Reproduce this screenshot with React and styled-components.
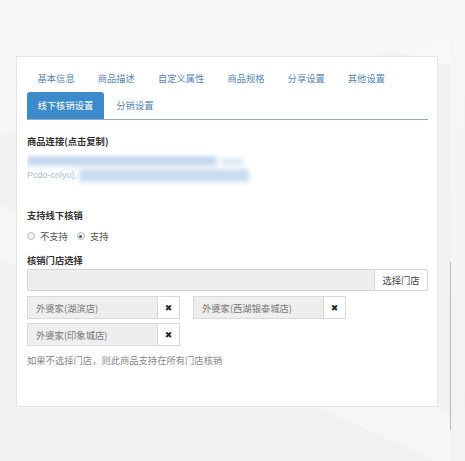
import React from 'react';
import styled, { createGlobalStyle } from 'styled-components';

const GlobalStyle = createGlobalStyle`
    html, body {
        margin: 0;
        padding: 0;
    }
    body {
        font-family: "Noto Sans CJK SC", "Noto Sans", sans-serif;
        background-color: #f1f1f1;
        background-image:
            linear-gradient(168deg, #f7f7f7 0%, #f7f7f7 24%, rgba(255,255,255,0) 24.2%),
            linear-gradient(205deg, rgba(255,255,255,0) 62%, #f6f6f6 62.2%, #f6f6f6 70%, rgba(255,255,255,0) 70.2%),
            linear-gradient(15deg, rgba(255,255,255,0) 88%, #f8f8f8 88.2%);
    }
`;

const Page = styled.div`
    display: flex;
    width: 465px;
    height: 461px;
    overflow: hidden;
`;

const Main = styled.div`
    width: 434px;
    padding: 56px 0 0 16px;
`;

const Strip = styled.div`
    width: 15px;
    padding-top: 262px;
    background: linear-gradient(180deg, #f6f6f6 0%, #f3f3f3 100%);
`;

const StripLine = styled.div`
    width: 1px;
    height: 168px;
    background: #b8b8b8;
`;

const Card = styled.div`
    box-sizing: border-box;
    width: 422px;
    height: 351px;
    background: #fff;
    border: 1px solid #e6e6e6;
    padding: 8px 9px 0 10px;
    font-size: 9.3px;
`;

const TabList = styled.ul`
    display: flex;
    flex-wrap: wrap;
    list-style: none;
    margin: 0;
    padding: 0;
    border-bottom: 1px solid #8fb0c0;
`;

const Tab = styled.li`
    height: 27px;
    line-height: 27px;
    padding: 0 10.5px;
    margin-right: 2px;
    border-radius: 3px 3px 0 0;
    white-space: nowrap;
    color: ${p => (p.$active ? '#fff' : '#5686b8')};
    background: ${p => (p.$active ? '#3d8bcb' : 'transparent')};
`;

const Label = styled.div`
    margin-top: ${p => p.$top || 0}px;
    line-height: 14px;
    font-weight: bold;
    color: #333;
`;

const LinkBlock = styled.div`
    margin-top: 6px;
    height: 32px;
    overflow: hidden;
`;

const BlurLine = styled.div`
    height: 14px;
    white-space: nowrap;
    display: flex;
    align-items: center;
`;

const Blur = styled.span`
    display: inline-block;
    height: ${p => p.$h || 10}px;
    width: ${p => p.$w}px;
    background: ${p => p.$c || '#c6daf0'};
    filter: blur(2.5px);
    margin-right: ${p => p.$gap || 0}px;
`;

const FaintText = styled.span`
    color: #aabdd0;
    font-family: "Liberation Sans", sans-serif;
    font-size: 9px;
    margin-right: 2px;
`;

const RadioRow = styled.div`
    margin-top: 7px;
    display: flex;
    align-items: center;
    line-height: 14px;
    color: #555;
`;

const Radio = styled.span`
    box-sizing: border-box;
    width: 8px;
    height: 8px;
    border-radius: 50%;
    border: 1px solid #bbb;
    background: #f3f3f3;
    display: inline-flex;
    align-items: center;
    justify-content: center;
    margin-right: 5px;
    margin-left: ${p => p.$left || 0}px;
    &::after {
        content: '';
        width: 3px;
        height: 3px;
        border-radius: 50%;
        background: ${p => (p.$checked ? '#555' : 'transparent')};
    }
`;

const InputGroup = styled.div`
    margin-top: 2px;
    display: flex;
    height: 22px;
    width: 401px;
`;

const Input = styled.div`
    flex: 1;
    box-sizing: border-box;
    background: #eee;
    border: 1px solid #d6d6d6;
    border-right: none;
    border-radius: 2px 0 0 2px;
`;

const AddonButton = styled.div`
    box-sizing: border-box;
    width: 54px;
    border: 1px solid #d6d6d6;
    border-radius: 0 2px 2px 0;
    background: #fff;
    color: #444;
    display: flex;
    align-items: center;
    justify-content: center;
`;

const TagGrid = styled.div`
    margin-top: 5px;
    display: flex;
    flex-wrap: wrap;
    column-gap: 13px;
    row-gap: 4px;
    width: 330px;
`;

const Tag = styled.div`
    display: flex;
    height: 23px;
    width: 153px;
`;

const TagName = styled.div`
    box-sizing: border-box;
    width: 130px;
    background: #eee;
    border: 1px solid #d9d9d9;
    border-right: none;
    color: #777;
    padding-left: 8px;
    display: flex;
    align-items: center;
`;

const TagRemove = styled.div`
    box-sizing: border-box;
    flex: 1;
    border: 1px solid #d9d9d9;
    background: #fff;
    color: #2a2a2a;
    font-family: "DejaVu Sans", sans-serif;
    font-size: 9px;
    display: flex;
    align-items: center;
    justify-content: center;
`;

const Help = styled.div`
    margin-top: 7px;
    line-height: 14px;
    color: #888;
`;

const tabs = ['基本信息', '商品描述', '自定义属性', '商品规格', '分享设置', '其他设置', '线下核销设置', '分销设置'];
const stores = ['外婆家(湖滨店)', '外婆家(西湖银泰城店)', '外婆家(印象城店)'];

const App = () => {
    return (
        <Page>
            <GlobalStyle />
            <Main>
                <Card>
                    <TabList>
                        {tabs.map(t => (
                            <Tab key={t} $active={t === '线下核销设置'}>{t}</Tab>
                        ))}
                    </TabList>

                    <Label $top={14}>商品连接(点击复制)</Label>
                    <LinkBlock>
                        <BlurLine>
                            <Blur $w={190} $c="#c3d7ee" $gap={4} />
                            <Blur $w={22} $h={7} $c="#dbe6f3" />
                        </BlurLine>
                        <BlurLine>
                            <FaintText>Pcdo-cnlyo},</FaintText>
                            <Blur $w={170} $h={13} $c="#cadcf0" />
                        </BlurLine>
                    </LinkBlock>

                    <Label $top={22}>支持线下核销</Label>
                    <RadioRow>
                        <Radio />不支持
                        <Radio $left={9} $checked />支持
                    </RadioRow>

                    <Label $top={10}>核销门店选择</Label>
                    <InputGroup>
                        <Input />
                        <AddonButton>选择门店</AddonButton>
                    </InputGroup>

                    <TagGrid>
                        {stores.map(s => (
                            <Tag key={s}>
                                <TagName>{s}</TagName>
                                <TagRemove>✖</TagRemove>
                            </Tag>
                        ))}
                    </TagGrid>

                    <Help>如果不选择门店，则此商品支持在所有门店核销</Help>
                </Card>
            </Main>
            <Strip>
                <StripLine />
            </Strip>
        </Page>
    );
};

export default App;
